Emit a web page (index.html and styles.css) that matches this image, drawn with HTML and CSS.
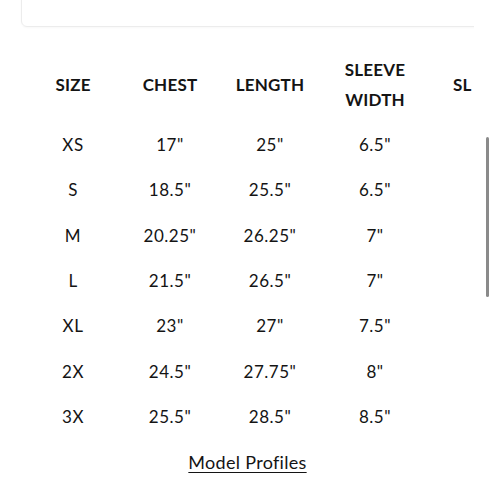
FILE: index.html
```html
<!DOCTYPE html>
<html>
<head>
<meta charset="utf-8">
<link rel="stylesheet" href="styles.css">
</head>
<body>
<div class="page">
  <div class="viewport">
    <div class="card"></div>
    <div class="table-wrap">
      <table class="chart">
        <colgroup>
          <col class="c1"><col class="c2"><col class="c3"><col class="c4"><col class="c5">
        </colgroup>
        <thead>
          <tr><th>SIZE</th><th>CHEST</th><th>LENGTH</th><th>SLEEVE<br>WIDTH</th><th class="last">SL</th></tr>
        </thead>
        <tbody>
          <tr><td>XS</td><td>17"</td><td>25"</td><td>6.5"</td><td class="last"></td></tr>
          <tr><td>S</td><td>18.5"</td><td>25.5"</td><td>6.5"</td><td class="last"></td></tr>
          <tr><td>M</td><td>20.25"</td><td>26.25"</td><td>7"</td><td class="last"></td></tr>
          <tr><td>L</td><td>21.5"</td><td>26.5"</td><td>7"</td><td class="last"></td></tr>
          <tr><td>XL</td><td>23"</td><td>27"</td><td>7.5"</td><td class="last"></td></tr>
          <tr><td>2X</td><td>24.5"</td><td>27.75"</td><td>8"</td><td class="last"></td></tr>
          <tr><td>3X</td><td>25.5"</td><td>28.5"</td><td>8.5"</td><td class="last"></td></tr>
        </tbody>
      </table>
    </div>
    <div class="footer"><a class="link" href="#">Model Profiles</a></div>
  </div>
  <div class="scrollbar"></div>
</div>
</body>
</html>
```

FILE: styles.css
```css
html, body {
  margin: 0;
  padding: 0;
  background: #ffffff;
}
body {
  font-family: Lato, "Open Sans", sans-serif;
  color: #141414;
  width: 495px;
  height: 495px;
  overflow: hidden;
}
.page {
  position: relative;
  width: 495px;
}
.viewport {
  width: 474px;
  overflow: hidden;
}
.card {
  margin: -12px -10px 0 21px;
  height: 37px;
  border: 1px solid #ececec;
  border-radius: 6px;
  box-shadow: 0 1px 2px rgba(0,0,0,0.03);
}
.table-wrap {
  margin-top: 20px;
}
.chart {
  border-collapse: collapse;
  table-layout: fixed;
  width: 450px;
  margin-left: 24px;
}
.c1 { width: 98px; }
.c2 { width: 96px; }
.c3 { width: 104px; }
.c4 { width: 106px; }
.c5 { width: 46px; }
.chart th {
  font-weight: 700;
  font-size: 17px;
  line-height: 30px;
  height: 75px;
  padding: 0;
  text-align: center;
  vertical-align: middle;
  letter-spacing: 0.2px;
}
.chart th.last {
  text-align: left;
  padding-left: 25px;
  white-space: nowrap;
}
.chart td {
  font-size: 17px;
  height: 45.3px;
  padding: 0;
  text-align: center;
  vertical-align: middle;
  letter-spacing: 0.5px;
}
.scrollbar {
  position: absolute;
  left: 486px;
  top: 137px;
  width: 3px;
  height: 160px;
  background: #8a8a8a;
  border-radius: 2px;
}
.footer {
  display: flex;
  justify-content: center;
  padding-top: 11px;
  width: 495px;
}
.link {
  color: #141414;
  font-size: 18px;
  line-height: 24px;
  text-decoration: underline;
  text-underline-offset: 3px;
  letter-spacing: 0.3px;
}
```
